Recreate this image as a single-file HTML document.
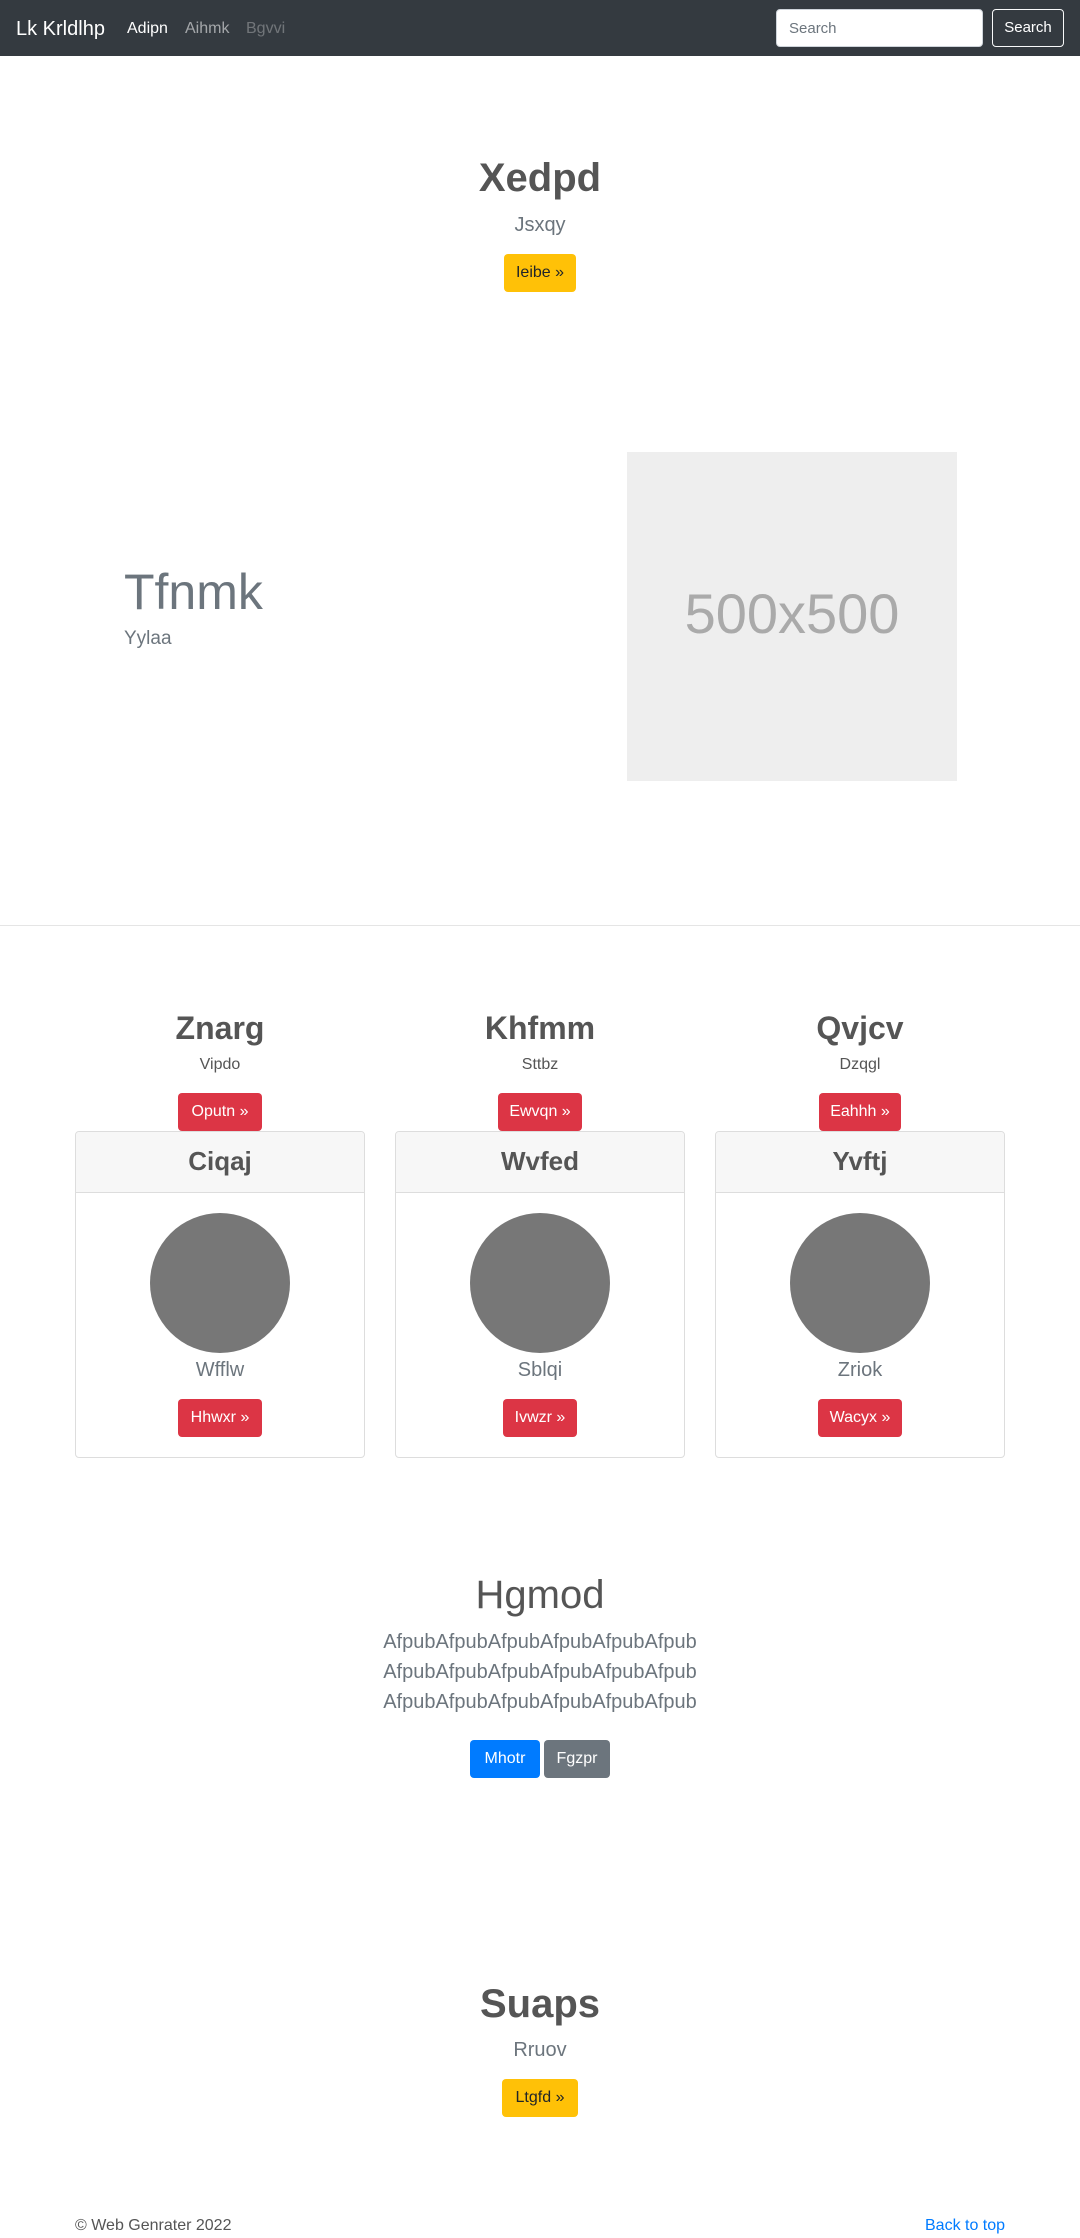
<!DOCTYPE html>
<html><head><meta charset="utf-8">
<style>
*{box-sizing:border-box;margin:0;padding:0}
body{width:1080px;height:2238px;position:relative;background:#fff;font-family:"Liberation Sans",sans-serif;color:#555;overflow:hidden}
.a{position:absolute}
.c{position:absolute;text-align:center;white-space:nowrap}
.btn{position:absolute;border-radius:4px;font-size:16px;line-height:38px;height:38px;text-align:center;white-space:nowrap}
.y{background:#ffc107;color:#212529}
.r{background:#dc3545;color:#fff}
</style></head><body>
<div class="a" style="left:0;top:0;width:1080px;height:56px;background:#343a40"></div>
<div class="a" style="left:16px;top:15px;font-size:20px;color:#fff;line-height:28px">Lk Krldlhp</div>
<div class="a" style="left:127px;top:18px;font-size:16px;color:#fff;line-height:22px">Adipn</div>
<div class="a" style="left:185px;top:18px;font-size:16px;color:rgba(255,255,255,.55);line-height:22px">Aihmk</div>
<div class="a" style="left:246px;top:18px;font-size:16px;color:rgba(255,255,255,.3);line-height:22px">Bgvvi</div>
<div class="a" style="left:776px;top:9px;width:207px;height:38px;background:#fff;border-radius:4px;border:1px solid #ced4da;font-size:15px;color:#6c757d;line-height:38px;padding-left:12px">Search</div>
<div class="a" style="left:992px;top:9px;width:72px;height:38px;border:1px solid #f8f9fa;border-radius:4px;color:#fff;font-size:15px;line-height:36px;text-align:center">Search</div>

<div class="c" style="left:0;width:1080px;top:154px;font-size:40px;font-weight:bold;line-height:48px">Xedpd</div>
<div class="c" style="left:0;width:1080px;top:210px;font-size:20px;font-weight:300;color:#6c757d;line-height:30px">Jsxqy</div>
<div class="btn y" style="left:504px;width:72px;top:254px">Ieibe »</div>

<div class="a" style="left:124px;top:562px;font-size:50px;font-weight:300;color:#6c757d;line-height:60px">Tfnmk</div>
<div class="a" style="left:124px;top:624px;font-size:19px;font-weight:300;color:#6c757d;line-height:30px">Yylaa</div>
<div class="a" style="left:627px;top:452px;width:330px;height:329px;background:#eee"></div>
<div class="c" style="left:627px;width:330px;top:580px;font-size:56px;color:#aaa;line-height:68px">500x500</div>

<div class="a" style="left:0;top:925px;width:1080px;height:1px;background:#e5e5e5"></div>

<div class="c" style="left:75px;width:290px;top:1008px;font-size:32px;font-weight:bold;line-height:40px">Znarg</div>
<div class="c" style="left:395px;width:290px;top:1008px;font-size:32px;font-weight:bold;line-height:40px">Khfmm</div>
<div class="c" style="left:715px;width:290px;top:1008px;font-size:32px;font-weight:bold;line-height:40px">Qvjcv</div>
<div class="c" style="left:75px;width:290px;top:1054px;font-size:16px;line-height:22px">Vipdo</div>
<div class="c" style="left:395px;width:290px;top:1054px;font-size:16px;line-height:22px">Sttbz</div>
<div class="c" style="left:715px;width:290px;top:1054px;font-size:16px;line-height:22px">Dzqgl</div>
<div class="btn r" style="left:178px;width:84px;top:1093px">Oputn »</div>
<div class="btn r" style="left:498px;width:84px;top:1093px">Ewvqn »</div>
<div class="btn r" style="left:819px;width:82px;top:1093px">Eahhh »</div>

<div class="a" style="left:75px;top:1131px;width:290px;height:327px;border:1px solid #ddd;border-radius:4px;overflow:hidden"><div style="height:61px;background:#f7f7f7;border-bottom:1px solid #ddd"></div></div>
<div class="a" style="left:395px;top:1131px;width:290px;height:327px;border:1px solid #ddd;border-radius:4px;overflow:hidden"><div style="height:61px;background:#f7f7f7;border-bottom:1px solid #ddd"></div></div>
<div class="a" style="left:715px;top:1131px;width:290px;height:327px;border:1px solid #ddd;border-radius:4px;overflow:hidden"><div style="height:61px;background:#f7f7f7;border-bottom:1px solid #ddd"></div></div>
<div class="c" style="left:75px;width:290px;top:1144px;font-size:26px;font-weight:bold;line-height:34px">Ciqaj</div>
<div class="c" style="left:395px;width:290px;top:1144px;font-size:26px;font-weight:bold;line-height:34px">Wvfed</div>
<div class="c" style="left:715px;width:290px;top:1144px;font-size:26px;font-weight:bold;line-height:34px">Yvftj</div>
<div class="a" style="left:150px;top:1213px;width:140px;height:140px;border-radius:50%;background:#777"></div>
<div class="a" style="left:470px;top:1213px;width:140px;height:140px;border-radius:50%;background:#777"></div>
<div class="a" style="left:790px;top:1213px;width:140px;height:140px;border-radius:50%;background:#777"></div>
<div class="c" style="left:75px;width:290px;top:1355px;font-size:20px;font-weight:300;color:#6c757d;line-height:30px">Wfflw</div>
<div class="c" style="left:395px;width:290px;top:1355px;font-size:20px;font-weight:300;color:#6c757d;line-height:30px">Sblqi</div>
<div class="c" style="left:715px;width:290px;top:1355px;font-size:20px;font-weight:300;color:#6c757d;line-height:30px">Zriok</div>
<div class="btn r" style="left:178px;width:84px;top:1399px">Hhwxr »</div>
<div class="btn r" style="left:503px;width:74px;top:1399px">Ivwzr »</div>
<div class="btn r" style="left:818px;width:84px;top:1399px">Wacyx »</div>

<div class="c" style="left:0;width:1080px;top:1570px;font-size:40px;font-weight:300;line-height:50px">Hgmod</div>
<div class="c" style="left:0;width:1080px;top:1627px;font-size:20px;font-weight:300;color:#6c757d;line-height:30px">AfpubAfpubAfpubAfpubAfpubAfpub<br>AfpubAfpubAfpubAfpubAfpubAfpub<br>AfpubAfpubAfpubAfpubAfpubAfpub</div>
<div class="btn" style="left:470px;width:70px;top:1740px;background:#007bff;color:#fff">Mhotr</div>
<div class="btn" style="left:544px;width:66px;top:1740px;background:#6c757d;color:#fff">Fgzpr</div>

<div class="c" style="left:0;width:1080px;top:1980px;font-size:40px;font-weight:bold;line-height:48px">Suaps</div>
<div class="c" style="left:0;width:1080px;top:2035px;font-size:20px;font-weight:300;color:#6c757d;line-height:30px">Rruov</div>
<div class="btn y" style="left:502px;width:76px;top:2079px">Ltgfd »</div>

<div class="a" style="left:75px;top:2215px;font-size:16px;line-height:22px">© Web Genrater 2022</div>
<div class="a" style="left:925px;top:2215px;font-size:16px;line-height:22px;color:#007bff">Back to top</div>
</body></html>
